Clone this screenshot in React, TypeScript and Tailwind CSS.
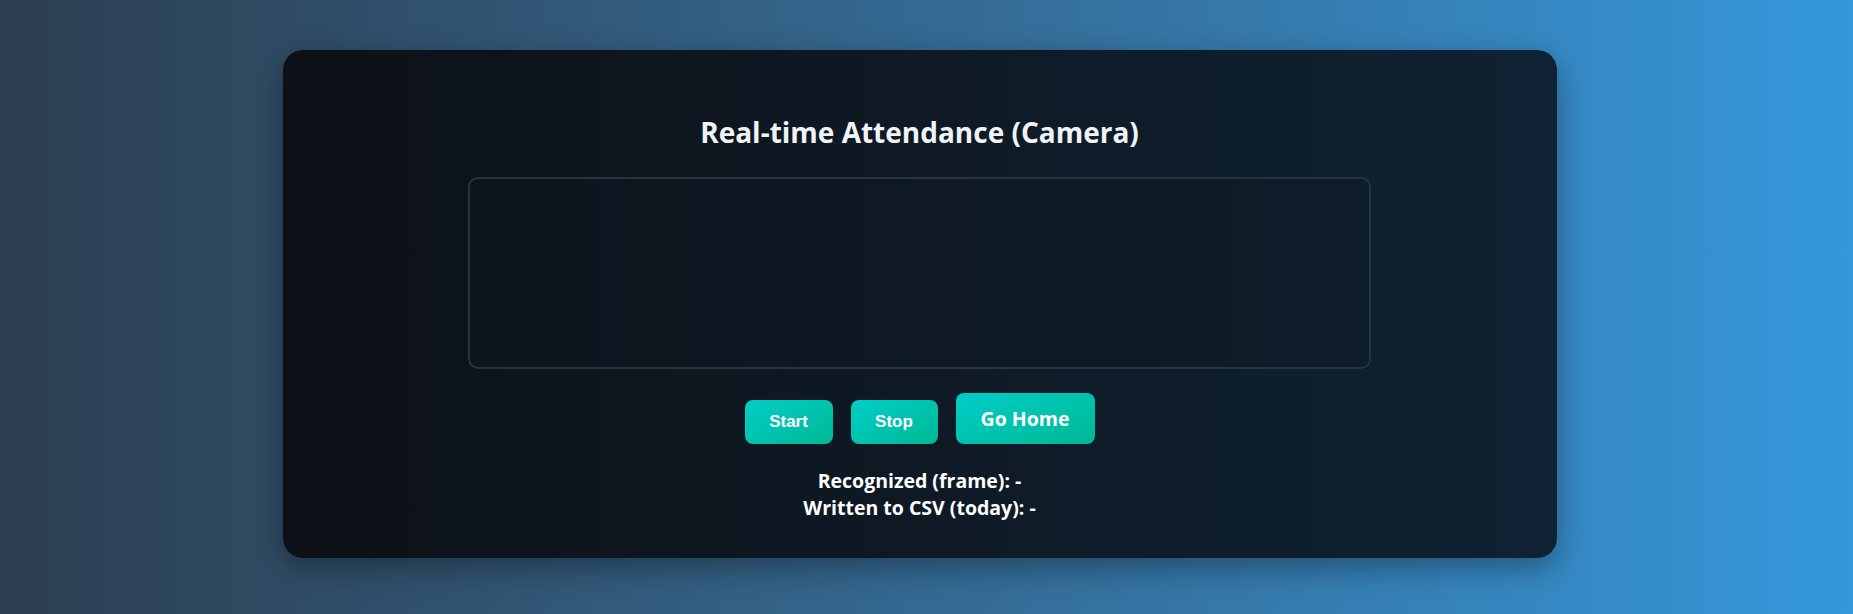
import React from "react";

export default function App() {
  const font = { fontFamily: '"Open Sans", "Noto Sans", sans-serif' };
  return (
    <div
      className="min-h-screen w-full bg-gradient-to-r from-[#2c3e50] to-[#3498db] flex justify-center pt-[50px] pb-[56px] pr-[14px]"
      style={font}
    >
      <div className="w-[1274px] h-[508px] rounded-[20px] bg-gradient-to-r from-[#0d1117] to-[#0f2233] shadow-[0_10px_30px_rgba(0,0,0,0.35)] flex flex-col items-center pt-[64px]">
        <h2 className="text-[28px] leading-[36px] font-bold text-[#f0f3f6]">
          Real-time Attendance (Camera)
        </h2>
        <div className="mt-[27px] w-[903px] h-[192px] rounded-[10px] border-2 border-[#27333d] bg-[#0d1a24]/40" />
        <div className="mt-[24px] flex items-end gap-[18px]">
          <button className="h-[44px] w-[88px] rounded-[8px] bg-gradient-to-br from-[#00cec9] to-[#00b894] text-white text-[17px] font-bold [font-family:'Liberation_Sans',Arial,sans-serif]">
            Start
          </button>
          <button className="h-[44px] w-[87px] rounded-[8px] bg-gradient-to-br from-[#00cec9] to-[#00b894] text-white text-[17px] font-bold [font-family:'Liberation_Sans',Arial,sans-serif]">
            Stop
          </button>
          <a className="h-[51px] w-[139px] flex items-center justify-center rounded-[8px] bg-gradient-to-br from-[#00cec9] to-[#00b894] text-white text-[19.5px] font-bold">
            Go Home
          </a>
        </div>
        <div className="mt-[23px] text-center text-white text-[19.5px] leading-[27px] font-bold">
          <div>Recognized (frame): -</div>
          <div>Written to CSV (today): -</div>
        </div>
      </div>
    </div>
  );
}
